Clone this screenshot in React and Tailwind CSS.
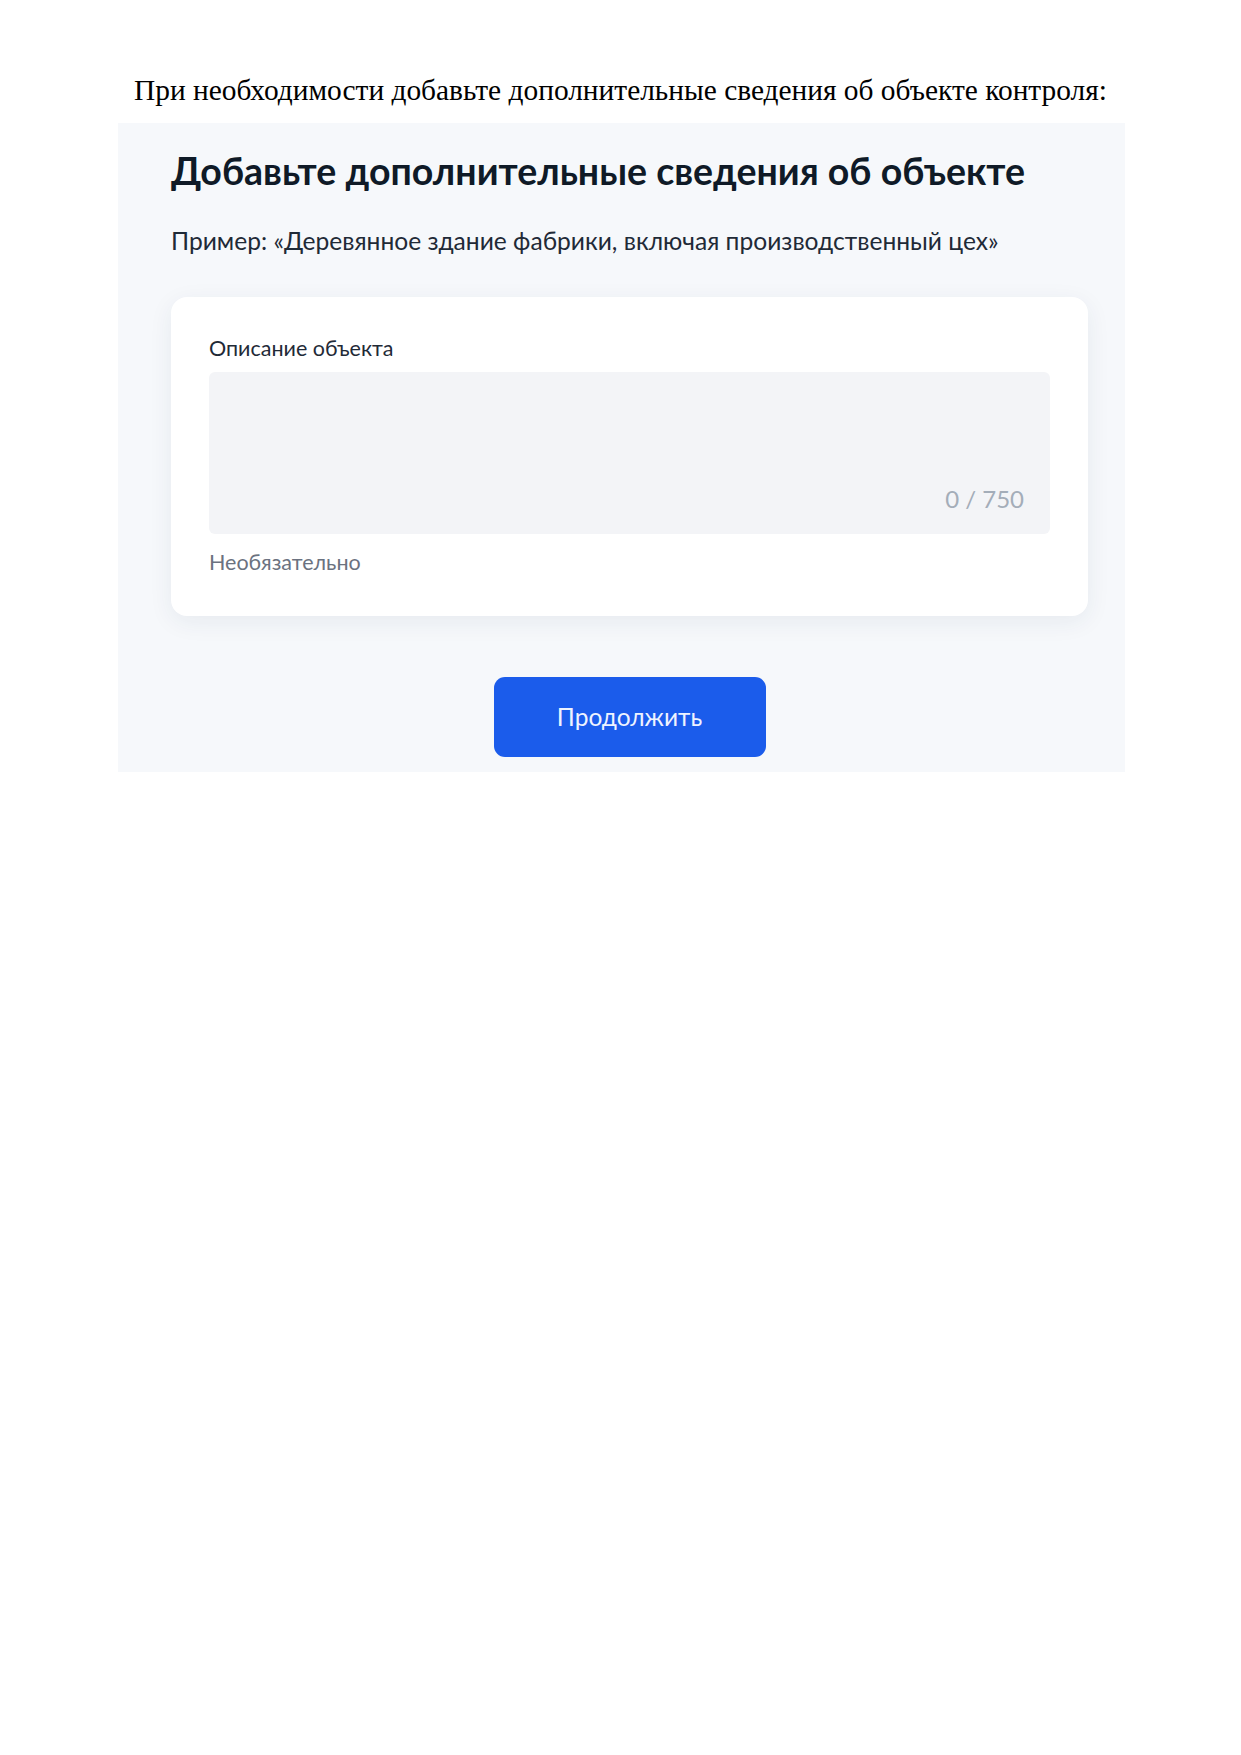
import React, { useState } from 'react';

const sans = { fontFamily: 'Lato, "Noto Sans", "Open Sans", sans-serif' };

export default function App() {
  const [text, setText] = useState('');

  return (
    <div className="min-h-[1755px] bg-white">
      <p className="pt-[73px] text-center text-[29.4px] leading-[34px] text-black font-['Liberation_Serif',serif]">
        При необходимости добавьте дополнительные сведения об объекте контроля:
      </p>

      {/* screenshot panel */}
      <div
        className="ml-[118px] mt-[16px] w-[1007px] bg-[#f6f8fb] pl-[53px] pr-[37px] pt-[25px] pb-[15px]"
        style={sans}
      >
        <h1 className="text-[37.5px] leading-[45px] font-bold text-[#0f1a27]">
          Добавьте дополнительные сведения об объекте
        </h1>
        <p className="mt-[33px] text-[24.6px] leading-[30px] text-[#1f2a37]">
          Пример: «Деревянное здание фабрики, включая производственный цех»
        </p>

        <div className="mt-[41px] rounded-2xl bg-white px-[38px] pt-[38px] pb-[41px] shadow-[0_6px_24px_rgba(30,50,90,0.07)]">
          <label className="block text-[21.5px] leading-[26px] text-[#1f2a37]">Описание объекта</label>
          <div className="relative mt-[11px] h-[162px] rounded-md bg-[#f3f4f7]">
            <textarea
              value={text}
              maxLength={750}
              onChange={(e) => setText(e.target.value)}
              className="h-full w-full resize-none bg-transparent px-5 py-4 text-[21px] outline-none"
            />
            <span className="absolute bottom-[20px] right-[26px] text-[24px] leading-[30px] text-[#a4adb9]">
              {text.length} / 750
            </span>
          </div>
          <p className="mt-[15px] text-[21.5px] leading-[26px] text-[#6b7280]">Необязательно</p>
        </div>

        <div className="mt-[61px] flex justify-center">
          <button className="h-[80px] w-[272px] rounded-[11px] bg-[#1b5ceb] text-[24.5px] text-[#eef3ff]">
            Продолжить
          </button>
        </div>
      </div>
    </div>
  );
}
